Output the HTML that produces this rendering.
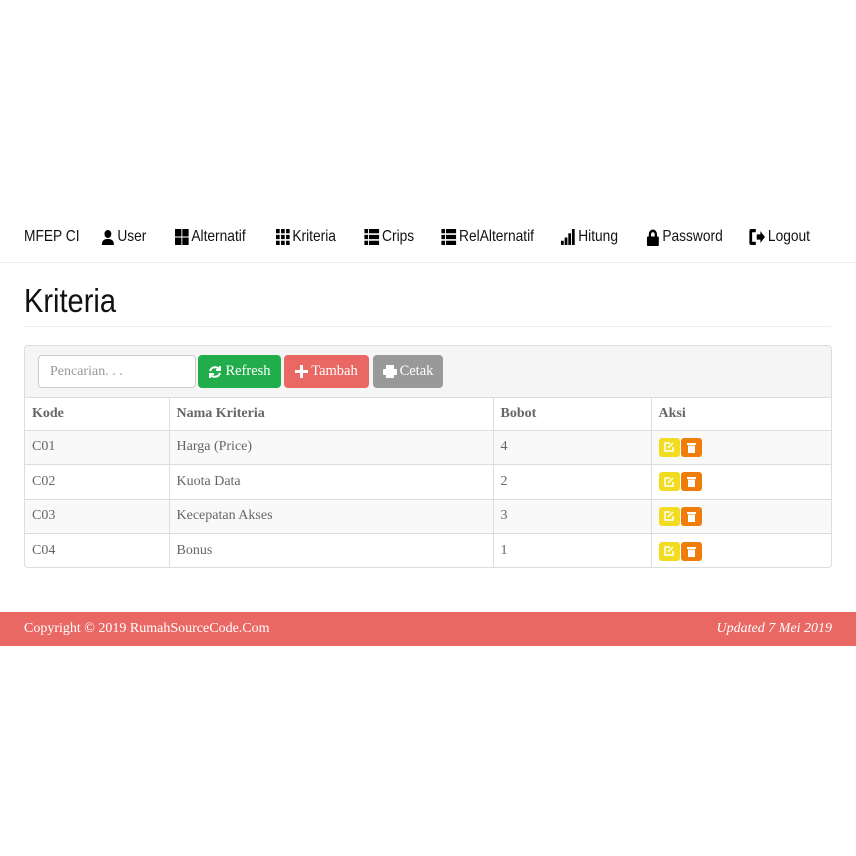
<!DOCTYPE html>
<html><head><meta charset="utf-8"><style>
*{box-sizing:border-box;margin:0;padding:0}
body{width:856px;height:856px;background:#fff;position:relative;font-family:"Liberation Serif",serif;color:#555;overflow:hidden}
.nav{position:absolute;top:210px;left:0;width:856px;height:53px;border-bottom:1px solid #eee;font-family:"Liberation Sans",sans-serif;font-size:16px;color:#111}
.nav span{position:absolute;top:18px;display:flex;align-items:center;gap:3px;white-space:nowrap;transform:scaleX(0.86);transform-origin:0 50%}
.nav svg{display:block}
h1{position:absolute;left:24px;top:282px;font-family:"Liberation Sans",sans-serif;font-weight:normal;font-size:33px;color:#111;transform:scaleX(0.88);transform-origin:0 50%}
.hr{position:absolute;left:24px;top:326px;width:807px;border-top:1px solid #eee}
.panel{position:absolute;left:24px;top:345px;width:808px;height:223px;border:1px solid #ddd;border-radius:4px;overflow:hidden}
.ph{height:52px;background:#f5f5f5;border-bottom:1px solid #ddd;position:relative}
.inp{position:absolute;left:13px;top:9px;width:158px;height:33px;background:#fff;border:1px solid #ccc;border-radius:4px;font-size:14px;color:#999;padding:8px 11px}
.btn{position:absolute;top:9px;height:33px;border-radius:4px;color:#fff;font-size:14.5px;display:flex;align-items:center;justify-content:center;gap:3px}
table{border-collapse:collapse;width:100%;font-size:14px}
td,th{text-align:left;padding:0 7px;border-right:1px solid #ddd;border-bottom:1px solid #ddd}
td:last-child,th:last-child{border-right:none}
th{height:32px;color:#666}
td{height:34.5px;color:#666}
tr.s td{background:#f9f9f9}
tr:last-child td{border-bottom:none}
.ab{display:inline-flex;align-items:center;justify-content:center;width:21px;height:19px;border-radius:3px;vertical-align:middle;margin-right:1px}
.foot{position:absolute;left:0;top:612px;width:856px;height:34px;background:#ea6864;color:#fff;font-size:14px}
.foot span{position:absolute;top:9px}
</style></head><body>
<div class="nav">
<span style="left:24px">MFEP CI</span>
<span style="left:101px"><svg width="16" height="16" viewBox="0 0 16 16"><circle cx="8" cy="5" r="4"/><path d="M1 16c0-5 3-6 7-6s7 1 7 6z"/></svg>User</span>
<span style="left:175px"><svg width="16" height="16" viewBox="0 0 15 15"><rect x="0" y="0" width="7" height="7"/><rect x="8" y="0" width="7" height="7"/><rect x="0" y="8" width="7" height="7"/><rect x="8" y="8" width="7" height="7"/></svg>Alternatif</span>
<span style="left:276px"><svg width="16" height="16" viewBox="0 0 15 15"><g><rect x="0" y="0" width="4" height="4"/><rect x="5.5" y="0" width="4" height="4"/><rect x="11" y="0" width="4" height="4"/><rect x="0" y="5.5" width="4" height="4"/><rect x="5.5" y="5.5" width="4" height="4"/><rect x="11" y="5.5" width="4" height="4"/><rect x="0" y="11" width="4" height="4"/><rect x="5.5" y="11" width="4" height="4"/><rect x="11" y="11" width="4" height="4"/></g></svg>Kriteria</span>
<span style="left:364px"><svg width="18" height="16" viewBox="0 0 16 15"><rect x="0" y="0" width="4" height="4"/><rect x="5" y="0" width="11" height="4"/><rect x="0" y="5.5" width="4" height="4"/><rect x="5" y="5.5" width="11" height="4"/><rect x="0" y="11" width="4" height="4"/><rect x="5" y="11" width="11" height="4"/></svg>Crips</span>
<span style="left:441px"><svg width="18" height="16" viewBox="0 0 16 15"><rect x="0" y="0" width="4" height="4"/><rect x="5" y="0" width="11" height="4"/><rect x="0" y="5.5" width="4" height="4"/><rect x="5" y="5.5" width="11" height="4"/><rect x="0" y="11" width="4" height="4"/><rect x="5" y="11" width="11" height="4"/></svg>RelAlternatif</span>
<span style="left:561px"><svg width="17" height="16" viewBox="0 0 16 15"><rect x="0" y="11" width="3" height="4"/><rect x="4" y="8" width="3" height="7"/><rect x="8" y="4" width="3" height="11"/><rect x="12" y="0" width="3" height="15"/></svg>Hitung</span>
<span style="left:646px"><svg width="16" height="17" viewBox="0 0 15 16"><path d="M3 7V5a4.5 4.5 0 0 1 9 0v2h-2.5V5a2 2 0 0 0-4 0v2z"/><rect x="1" y="7" width="13" height="9" rx="1"/></svg>Password</span>
<span style="left:749px"><svg width="19" height="16" viewBox="0 0 17 15"><path d="M7 0H2a2 2 0 0 0-2 2v11a2 2 0 0 0 2 2h5v-3H3V3h4z"/><path d="M8 5h4V2l5 5.5-5 5.5v-3H8z"/></svg>Logout</span>
</div>
<h1>Kriteria</h1>
<div class="hr"></div>
<div class="panel">
<div class="ph">
<div class="inp">Pencarian. . .</div>
<div class="btn" style="left:173px;width:83px;background:#22ad4c"><svg width="14" height="14" viewBox="0 0 14 14" fill="none" stroke="#fff" stroke-width="2"><path d="M12 5A5.5 5.5 0 0 0 2 6"/><path d="M2 9a5.5 5.5 0 0 0 10-1"/><path d="M12 1v4H8" fill="#fff"/><path d="M2 13V9h4"/></svg>Refresh</div>
<div class="btn" style="left:259px;width:85px;background:#ea6864"><svg width="13" height="13" viewBox="0 0 13 13"><path d="M5 0h3v5h5v3H8v5H5V8H0V5h5z" fill="#fff"/></svg>Tambah</div>
<div class="btn" style="left:348px;width:70px;background:#999"><svg width="14" height="13" viewBox="0 0 14 13" fill="#fff"><rect x="3" y="0" width="8" height="4"/><rect x="0" y="4" width="14" height="6" rx="1"/><rect x="3" y="8" width="8" height="5"/></svg>Cetak</div>
</div>
<table>
<tr><th style="width:144px">Kode</th><th style="width:324px">Nama Kriteria</th><th style="width:158px">Bobot</th><th>Aksi</th></tr>
<tr class="s"><td>C01</td><td>Harga (Price)</td><td>4</td><td><span class="ab" style="background:#f2dc22"><svg width="10" height="10" viewBox="0 0 10 10" fill="none" stroke="#fff" stroke-width="1.5"><path d="M6 1H1v8h8V5"/><path d="M4 6l5-5"/></svg></span><span class="ab" style="background:#f07d0a"><svg width="9" height="11" viewBox="0 0 9 11" fill="#fff"><rect x="0" y="1" width="9" height="2"/><rect x="1" y="3.5" width="7" height="7.5"/></svg></span></td></tr>
<tr><td>C02</td><td>Kuota Data</td><td>2</td><td><span class="ab" style="background:#f2dc22"><svg width="10" height="10" viewBox="0 0 10 10" fill="none" stroke="#fff" stroke-width="1.5"><path d="M6 1H1v8h8V5"/><path d="M4 6l5-5"/></svg></span><span class="ab" style="background:#f07d0a"><svg width="9" height="11" viewBox="0 0 9 11" fill="#fff"><rect x="0" y="1" width="9" height="2"/><rect x="1" y="3.5" width="7" height="7.5"/></svg></span></td></tr>
<tr class="s"><td>C03</td><td>Kecepatan Akses</td><td>3</td><td><span class="ab" style="background:#f2dc22"><svg width="10" height="10" viewBox="0 0 10 10" fill="none" stroke="#fff" stroke-width="1.5"><path d="M6 1H1v8h8V5"/><path d="M4 6l5-5"/></svg></span><span class="ab" style="background:#f07d0a"><svg width="9" height="11" viewBox="0 0 9 11" fill="#fff"><rect x="0" y="1" width="9" height="2"/><rect x="1" y="3.5" width="7" height="7.5"/></svg></span></td></tr>
<tr><td>C04</td><td>Bonus</td><td>1</td><td><span class="ab" style="background:#f2dc22"><svg width="10" height="10" viewBox="0 0 10 10" fill="none" stroke="#fff" stroke-width="1.5"><path d="M6 1H1v8h8V5"/><path d="M4 6l5-5"/></svg></span><span class="ab" style="background:#f07d0a"><svg width="9" height="11" viewBox="0 0 9 11" fill="#fff"><rect x="0" y="1" width="9" height="2"/><rect x="1" y="3.5" width="7" height="7.5"/></svg></span></td></tr>
</table>
</div>
<div class="foot"><span style="left:24px">Copyright © 2019 RumahSourceCode.Com</span><span style="right:24px;font-style:italic">Updated 7 Mei 2019</span></div>
</body></html>
